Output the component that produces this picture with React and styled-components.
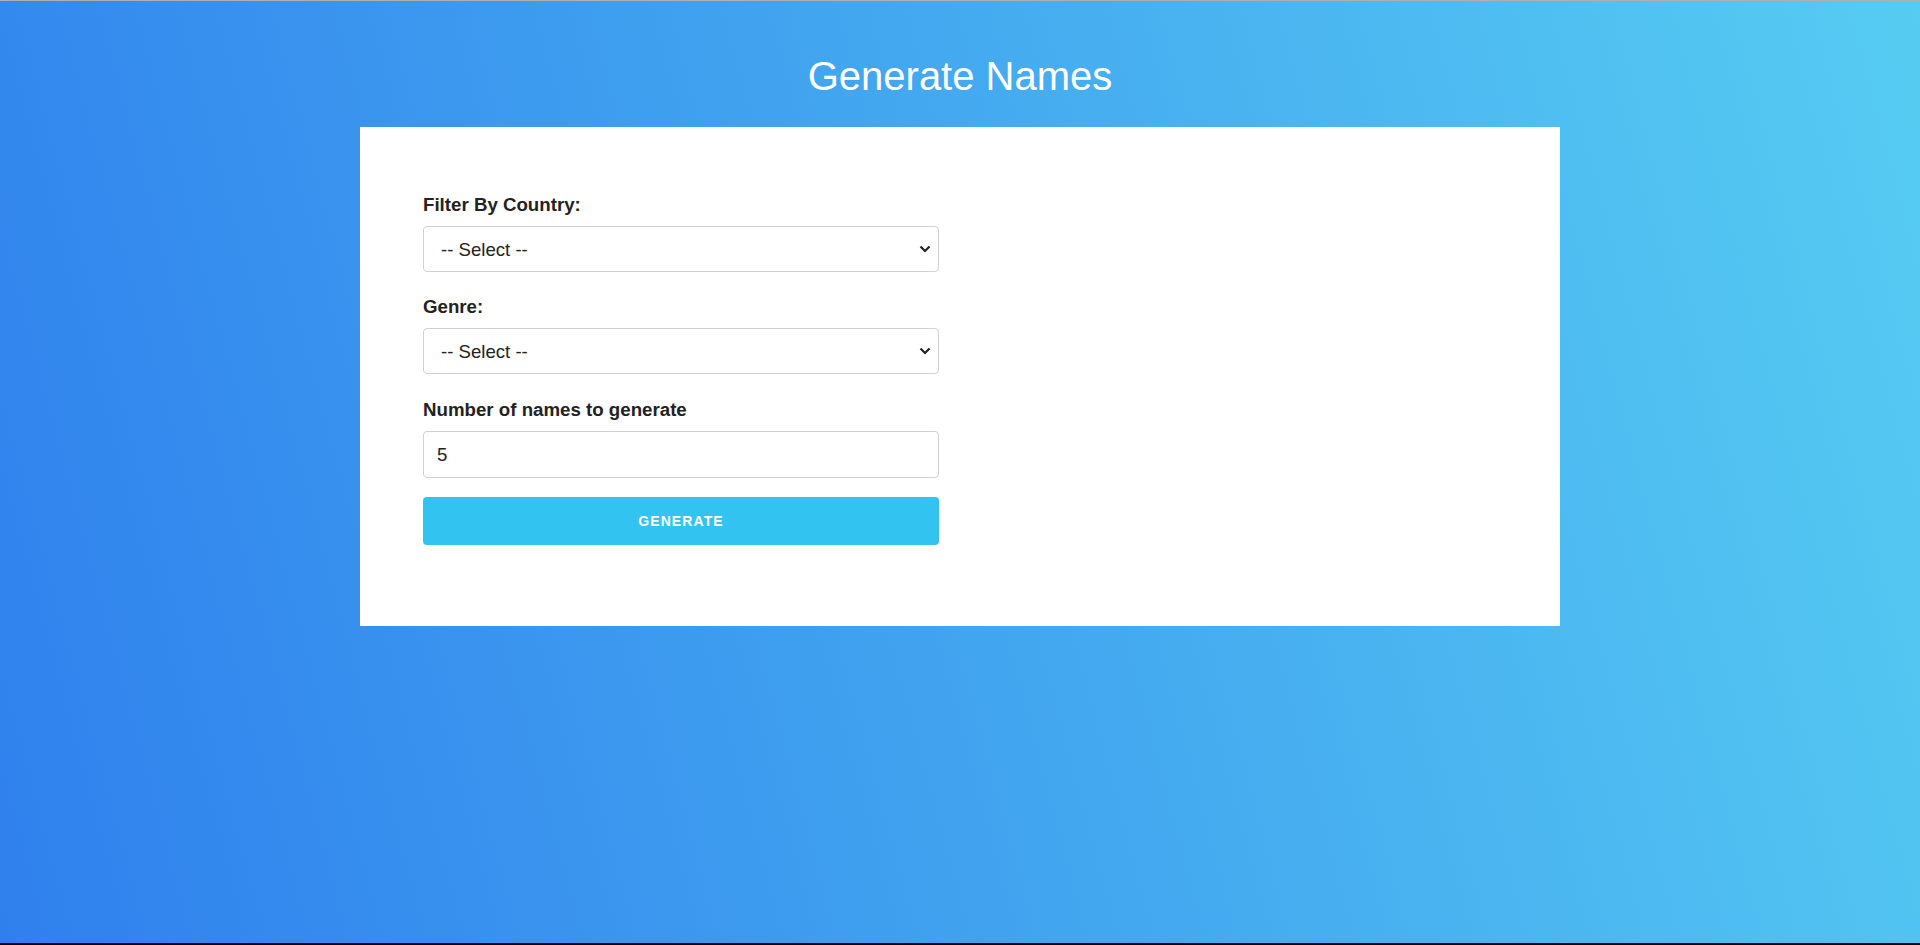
import React from 'react'
import styled, { createGlobalStyle } from 'styled-components'

const GlobalStyle = createGlobalStyle`
    html {
        background:#000;
    }
    body {
        margin:0;
        font-family:"Liberation Sans", Arial, sans-serif;
        color:#222;
    }
    * {
        box-sizing:border-box;
    }
`

const Page = styled.div`
    height:calc(100vh - 2px);
    border-top:1px solid #a9b0b8;
    background:linear-gradient(75deg, #2F80ED, #56CCF2);
    display:flex;
    flex-direction:column;
    align-items:center;
    padding-top:52px;
`

const Title = styled.h1`
    margin:0 0 28px;
    font-size:40px;
    line-height:46px;
    font-weight:400;
    color:#fff;
`

const Card = styled.div`
    width:1200px;
    background:#fff;
    padding:67px 63px 81px;
`

const Form = styled.form`
    width:516px;
    display:flex;
    flex-direction:column;
`

const Label = styled.label`
    display:block;
    font-size:18.7px;
    line-height:21px;
    font-weight:700;
    color:#222;
    margin-bottom:11px;
`

const Field = styled.div`
    display:flex;
    flex-direction:column;
    margin-bottom:${(p) => p.$gap || 24}px;
`

const SelectWrap = styled.div`
    position:relative;
    height:46px;
`

const Select = styled.select`
    appearance:none;
    width:100%;
    height:100%;
    border:1px solid #d1d1d1;
    border-radius:4px;
    background:#fff;
    padding:0 30px 0 17px;
    font-family:inherit;
    font-size:18.6px;
    color:#222;
    outline:none;
`

const Chevron = styled.svg`
    position:absolute;
    right:8px;
    top:50%;
    transform:translateY(-50%);
    pointer-events:none;
`

const Input = styled.input`
    width:100%;
    height:47px;
    border:1px solid #d1d1d1;
    border-radius:4px;
    padding:0 13px;
    font-family:inherit;
    font-size:18.6px;
    color:#222;
    outline:none;
`

const Button = styled.button`
    height:48px;
    border:none;
    border-radius:4px;
    background:#33c3f0;
    color:#fff;
    font-family:inherit;
    font-size:14px;
    font-weight:700;
    letter-spacing:1.1px;
    text-transform:uppercase;
    cursor:pointer;
`

function Dropdown({ options }) {
    return (
        <SelectWrap>
            <Select defaultValue="">
                <option value="">-- Select --</option>
                {options.map((o) => (
                    <option key={o} value={o}>{o}</option>
                ))}
            </Select>
            <Chevron width="12" height="8" viewBox="0 0 12 8">
                <polyline points="1.5,1.5 6,6 10.5,1.5" fill="none" stroke="#222" strokeWidth="2.2" />
            </Chevron>
        </SelectWrap>
    )
}

export default function App() {
    const countries = ["France", "Germany", "Italy", "Japan", "Spain", "United States"]
    const genres = ["Female", "Male"]

    return (
        <Page>
            <GlobalStyle />
            <Title>Generate Names</Title>
            <Card>
                <Form onSubmit={(e) => e.preventDefault()}>
                    <Field>
                        <Label>Filter By Country:</Label>
                        <Dropdown options={countries} />
                    </Field>
                    <Field $gap={25}>
                        <Label>Genre:</Label>
                        <Dropdown options={genres} />
                    </Field>
                    <Field $gap={19}>
                        <Label>Number of names to generate</Label>
                        <Input type="text" defaultValue="5" />
                    </Field>
                    <Button type="submit">Generate</Button>
                </Form>
            </Card>
        </Page>
    )
}
